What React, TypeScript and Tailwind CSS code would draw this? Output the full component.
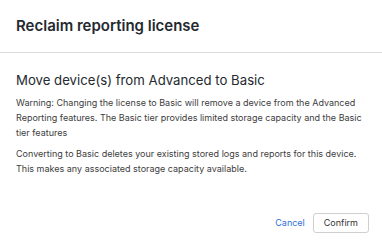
export default function App() {
  return (
    <div className="w-[382px] h-[244px] bg-white flex flex-col text-[#1f2328]" style={{ fontFamily: "Inter, 'Noto Sans', sans-serif" }}>
      <div className="h-[53px] px-4 flex items-center border-b border-[#dcdcdc]">
        <h1 className="text-[15px] font-semibold text-[#24292f]">Reclaim reporting license</h1>
      </div>
      <div className="px-4 pt-[17px] flex flex-col">
        <h2 className="text-[13.2px] font-normal text-[#24292f] leading-[20px]">Move device(s) from Advanced to Basic</h2>
        <p className="mt-[5px] text-[9px] leading-[15px] text-[#3d3d3d]">Warning: Changing the license to Basic will remove a device from the Advanced Reporting features. The Basic tier provides limited storage capacity and the Basic tier features</p>
        <p className="mt-[6px] text-[9px] leading-[15px] text-[#3d3d3d]">Converting to Basic deletes your existing stored logs and reports for this device. This makes any associated storage capacity available.</p>
      </div>
      <div className="mt-auto mb-[11px] px-[13px] flex items-center justify-end gap-[8px]">
        <button className="text-[9px] text-[#2f6fd6] px-0">Cancel</button>
        <button className="h-[20px] px-[10px] text-[9px] text-[#333] border border-[#cfcfcf] rounded-[3px] bg-white">Confirm</button>
      </div>
    </div>
  );
}
